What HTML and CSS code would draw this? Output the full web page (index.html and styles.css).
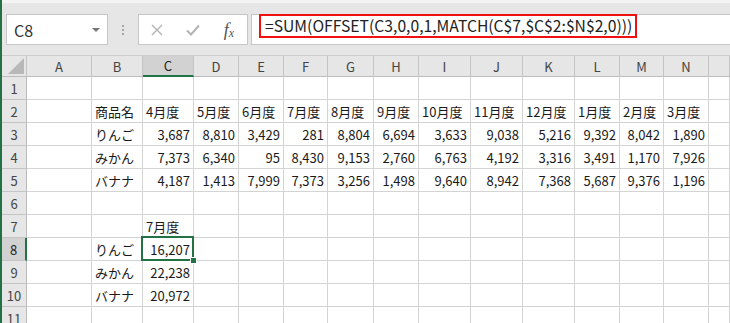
FILE: index.html
```html
<!DOCTYPE html>
<html lang="ja">
<head>
    <meta charset="UTF-8">
    <title>OFFSET MATCH</title>
    <link rel="stylesheet" href="styles.css">
</head>
<body>
<div class="app">
    <div class="ribbon-edge"></div>

    <div class="formula-bar">
        <div class="name-box">
            <span>C8</span>
            <span class="caret"></span>
        </div>
        <div class="grip"><i></i><i></i><i></i></div>
        <div class="fn-box">
            <span class="fn-btn">
                <svg width="12" height="12" viewBox="0 0 12 12"><path d="M1 1L11 11M11 1L1 11" stroke="#b3b3b3" stroke-width="1.4" fill="none"/></svg>
            </span>
            <span class="fn-btn">
                <svg width="14" height="12" viewBox="0 0 14 12"><path d="M1 6.5L5 10.5L13 1.5" stroke="#b3b3b3" stroke-width="2" fill="none"/></svg>
            </span>
            <span class="fn-btn"><span class="fx"><i>f</i><sub>x</sub></span></span>
        </div>
        <div class="formula">
            <span class="formula-text">=SUM(OFFSET(C3,0,0,1,MATCH(C$7,$C$2:$N$2,0)))</span>
        </div>
    </div>

    <div class="sheet">
        <div class="row head">
            <div class="corner"><svg width="16" height="16" viewBox="0 0 16 16"><polygon points="16,0 16,16 0,16" fill="#b8b8b8"/></svg></div>
            <div>A</div><div>B</div><div class="sel-col">C</div><div>D</div><div>E</div><div>F</div><div>G</div>
            <div>H</div><div>I</div><div>J</div><div>K</div><div>L</div><div>M</div><div>N</div><div></div>
        </div>
        <div class="row">
            <div class="rh">1</div>
            <div></div><div></div><div></div><div></div><div></div><div></div><div></div>
            <div></div><div></div><div></div><div></div><div></div><div></div><div></div><div></div>
        </div>
        <div class="row">
            <div class="rh">2</div>
            <div></div><div>商品名</div><div>4月度</div><div>5月度</div><div>6月度</div><div>7月度</div><div>8月度</div>
            <div>9月度</div><div>10月度</div><div>11月度</div><div>12月度</div><div>1月度</div><div>2月度</div><div>3月度</div><div></div>
        </div>
        <div class="row">
            <div class="rh">3</div>
            <div></div><div>りんご</div><div class="num">3,687</div><div class="num">8,810</div><div class="num">3,429</div><div class="num">281</div><div class="num">8,804</div>
            <div class="num">6,694</div><div class="num">3,633</div><div class="num">9,038</div><div class="num">5,216</div><div class="num">9,392</div><div class="num">8,042</div><div class="num">1,890</div><div></div>
        </div>
        <div class="row">
            <div class="rh">4</div>
            <div></div><div>みかん</div><div class="num">7,373</div><div class="num">6,340</div><div class="num">95</div><div class="num">8,430</div><div class="num">9,153</div>
            <div class="num">2,760</div><div class="num">6,763</div><div class="num">4,192</div><div class="num">3,316</div><div class="num">3,491</div><div class="num">1,170</div><div class="num">7,926</div><div></div>
        </div>
        <div class="row">
            <div class="rh">5</div>
            <div></div><div>バナナ</div><div class="num">4,187</div><div class="num">1,413</div><div class="num">7,999</div><div class="num">7,373</div><div class="num">3,256</div>
            <div class="num">1,498</div><div class="num">9,640</div><div class="num">8,942</div><div class="num">7,368</div><div class="num">5,687</div><div class="num">9,376</div><div class="num">1,196</div><div></div>
        </div>
        <div class="row">
            <div class="rh">6</div>
            <div></div><div></div><div></div><div></div><div></div><div></div><div></div>
            <div></div><div></div><div></div><div></div><div></div><div></div><div></div><div></div>
        </div>
        <div class="row">
            <div class="rh">7</div>
            <div></div><div></div><div>7月度</div><div></div><div></div><div></div><div></div>
            <div></div><div></div><div></div><div></div><div></div><div></div><div></div><div></div>
        </div>
        <div class="row">
            <div class="rh sel-row">8</div>
            <div></div><div>りんご</div><div class="num active">16,207</div><div></div><div></div><div></div><div></div>
            <div></div><div></div><div></div><div></div><div></div><div></div><div></div><div></div>
        </div>
        <div class="row">
            <div class="rh">9</div>
            <div></div><div>みかん</div><div class="num">22,238</div><div></div><div></div><div></div><div></div>
            <div></div><div></div><div></div><div></div><div></div><div></div><div></div><div></div>
        </div>
        <div class="row">
            <div class="rh">10</div>
            <div></div><div>バナナ</div><div class="num">20,972</div><div></div><div></div><div></div><div></div>
            <div></div><div></div><div></div><div></div><div></div><div></div><div></div><div></div>
        </div>
        <div class="row last">
            <div class="rh">11</div>
            <div></div><div></div><div></div><div></div><div></div><div></div><div></div>
            <div></div><div></div><div></div><div></div><div></div><div></div><div></div><div></div>
        </div>
    </div>
</div>
</body>
</html>
```

FILE: styles.css
```css
html, body {
    margin: 0;
    padding: 0;
}
body {
    width: 730px;
    height: 323px;
    overflow: hidden;
    background-color: #e6e6e6;
    font-family: "Noto Sans CJK JP", "Noto Sans", sans-serif;
    color: #222;
}
.app {
    border-left: 2px solid #217346;
    height: 323px;
    box-sizing: border-box;
}
.ribbon-edge {
    height: 3px;
    background-color: #f3f3f3;
}

/* formula bar */
.formula-bar {
    display: flex;
    height: 31px;
    margin-top: 11px;
    margin-bottom: 10px;
}
.name-box {
    width: 102px;
    margin-left: 4px;
    box-sizing: border-box;
    background: white;
    border: 1px solid #c6c6c6;
    display: flex;
    align-items: center;
    justify-content: space-between;
    padding: 0 7px 0 7px;
    font-size: 16px;
    color: #333;
}
.caret {
    width: 0;
    height: 0;
    border-left: 4px solid transparent;
    border-right: 4px solid transparent;
    border-top: 4px solid #777;
}
.grip {
    width: 30px;
    display: flex;
    flex-direction: column;
    align-items: center;
    justify-content: center;
    gap: 2px;
}
.grip i {
    width: 2px;
    height: 2px;
    background-color: #a6a6a6;
}
.fn-box {
    width: 110px;
    box-sizing: border-box;
    background: white;
    border: 1px solid #c6c6c6;
    display: flex;
    align-items: center;
    justify-content: space-around;
}
.fn-btn {
    width: 16px;
    display: flex;
    justify-content: center;
    align-items: center;
}
.fx {
    font-family: "Liberation Serif", serif;
    font-size: 18px;
    line-height: 20px;
    color: #555;
    font-style: italic;
}
.fx sub {
    font-size: 12px;
    vertical-align: -1px;
    line-height: 0;
}
.formula {
    flex: 1;
    margin-left: 3px;
    margin-right: -2px;
    background: white;
    border: 1px solid #c6c6c6;
    display: flex;
    align-items: flex-start;
}
.formula-text {
    margin: -1px 0 0 7px;
    border: 2px solid #f01010;
    height: 20px;
    line-height: 20px;
    padding: 0 3px 0 4px;
    font-size: 15.7px;
    color: #222;
    white-space: nowrap;
}

/* sheet */
.sheet {
    border-top: 1px solid #cdcdcd;
    background: white;
}
.row {
    display: grid;
    grid-template-columns: 25px 65px 51px 51px 45px 45px 44px 46px 45px 52px 52px 52px 45px 44px 45px 1fr;
    height: 23px;
}
.row > div {
    box-sizing: border-box;
    border-right: 1px solid #d4d4d4;
    border-bottom: 1px solid #d4d4d4;
    font-size: 13px;
    display: flex;
    align-items: center;
    padding: 0 3px;
    white-space: nowrap;
    color: #1a1a1a;
}
.row.last > div {
    align-items: flex-start;
    padding-top: 2px;
}
.row > div.num {
    justify-content: flex-end;
    padding-right: 3px;
}
.row.head {
    height: 21px;
}
.row.head > div {
    background-color: #e6e6e6;
    border-right-color: #c4c4c4;
    border-bottom-color: #bcbcbc;
    justify-content: center;
    color: #444;
    padding: 0;
}
.row.head > div.corner {
    justify-content: flex-end;
    align-items: flex-end;
    padding: 0 2px 2px 0;
}
.row > div.rh {
    background-color: #e6e6e6;
    border-right-color: #bcbcbc;
    border-bottom-color: #c4c4c4;
    justify-content: center;
    color: #444;
    padding: 0;
}
.row.last > div.rh {
    padding-top: 2px;
}
.row.head > div.sel-col {
    background-color: #d2d2d2;
    border-bottom: 2px solid #217346;
    color: #222;
}
.row > div.sel-row {
    background-color: #d2d2d2;
    border-right: 2px solid #217346;
    color: #222;
}
.row > div.active {
    position: relative;
}
.active::after {
    content: "";
    position: absolute;
    left: -2px;
    top: -2px;
    right: -1px;
    bottom: -1px;
    border: 2px solid #217346;
}
.active::before {
    content: "";
    position: absolute;
    right: -4px;
    bottom: -4px;
    width: 5px;
    height: 5px;
    background: #217346;
    border: 1px solid white;
    z-index: 1;
}
```
